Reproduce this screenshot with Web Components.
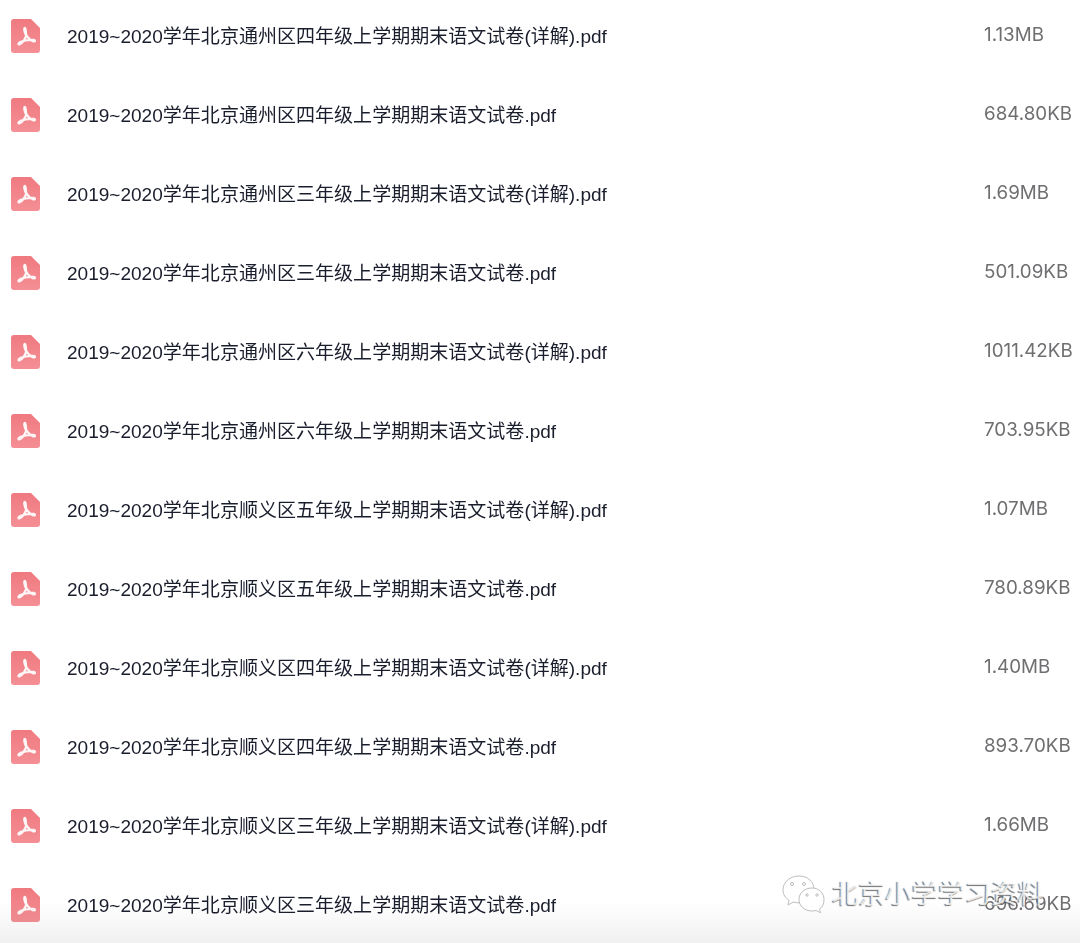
<!DOCTYPE html>
<html lang="zh">
<head>
<meta charset="utf-8">
<title>pdf list</title>
<style>
  html, body { margin: 0; padding: 0; background: #fff; }
  body { width: 1080px; height: 943px; overflow: hidden; position: relative; font-family: "Liberation Sans", "Noto Sans CJK SC", sans-serif; }
</style>
</head>
<body>
<file-list>
  <file-row size="1.13MB">2019~2020学年北京通州区四年级上学期期末语文试卷(详解).pdf</file-row>
  <file-row size="684.80KB">2019~2020学年北京通州区四年级上学期期末语文试卷.pdf</file-row>
  <file-row size="1.69MB">2019~2020学年北京通州区三年级上学期期末语文试卷(详解).pdf</file-row>
  <file-row size="501.09KB">2019~2020学年北京通州区三年级上学期期末语文试卷.pdf</file-row>
  <file-row size="1011.42KB">2019~2020学年北京通州区六年级上学期期末语文试卷(详解).pdf</file-row>
  <file-row size="703.95KB">2019~2020学年北京通州区六年级上学期期末语文试卷.pdf</file-row>
  <file-row size="1.07MB">2019~2020学年北京顺义区五年级上学期期末语文试卷(详解).pdf</file-row>
  <file-row size="780.89KB">2019~2020学年北京顺义区五年级上学期期末语文试卷.pdf</file-row>
  <file-row size="1.40MB">2019~2020学年北京顺义区四年级上学期期末语文试卷(详解).pdf</file-row>
  <file-row size="893.70KB">2019~2020学年北京顺义区四年级上学期期末语文试卷.pdf</file-row>
  <file-row size="1.66MB">2019~2020学年北京顺义区三年级上学期期末语文试卷(详解).pdf</file-row>
  <file-row size="696.69KB">2019~2020学年北京顺义区三年级上学期期末语文试卷.pdf</file-row>
</file-list>
<wechat-mark>北京小学学习资料</wechat-mark>

<script>
class FileList extends HTMLElement{
    constructor(){
        super();
        this.attachShadow({mode:'open'})
        this.shadowRoot.innerHTML = `
      <style>
        :host { display: flex; flex-direction: column; margin-top: -4px; }
      </style>
      <slot></slot>
        `
    }
}
customElements.define('file-list', FileList)

class FileRow extends HTMLElement{
    constructor(){
        super();
        this.attachShadow({mode:'open'})
        const size = this.getAttribute('size') || '';
        this.shadowRoot.innerHTML = `
      <style>
        :host {
          display: flex;
          align-items: center;
          height: 79px;
          padding-left: 11px;
          font-size: 19.05px;
        }
        svg { width: 29px; height: 34px; flex: none; margin-right: 27px; filter: blur(.4px); }
        .name { flex: 1; color: #1a1d2c; white-space: nowrap; position: relative; top: -1px; filter: blur(.3px); }
        .size { width: 96px; flex: none; color: #6f6f72; white-space: nowrap; font: 18.8px Inter, "Liberation Sans", sans-serif; position: relative; top: -1px; filter: blur(.3px); }
      </style>
      <svg viewBox="0 0 29 34">
        <defs>
          <linearGradient id="g" x1="0" y1="0" x2="0" y2="1">
            <stop offset="0" stop-color="#ef7a80"/>
            <stop offset="1" stop-color="#f48f95"/>
          </linearGradient>
        </defs>
        <path d="M3 0H20L29 9V31a3 3 0 0 1-3 3H3a3 3 0 0 1-3-3V3a3 3 0 0 1 3-3Z" fill="url(#g)"/>
        <path d="M13.800 9C12.800 9 13.200 12.500 15.200 16.800C13.800 20.500 11.200 24 8.600 25.300C7 26 6.800 24 9.800 22.800C13 21.600 18 20.400 22.600 21C24.600 21.300 24.300 23 22.200 22.300C19.800 21.500 17 19 15.200 15.800C14.600 13 15 9 13.800 9Z" fill="none" stroke="#fff" stroke-opacity=".92" stroke-width="2.300" stroke-linejoin="round"/>
      </svg>
      <span class="name"><slot></slot></span>
      <span class="size">${size}</span>
        `
    }
}
customElements.define('file-row', FileRow)

class WechatMark extends HTMLElement{
    constructor(){
        super();
        this.attachShadow({mode:'open'})
        this.shadowRoot.innerHTML = `
      <style>
        :host {
          position: absolute;
          left: 0; right: 0; bottom: 0;
          height: 83px;
          display: flex;
          align-items: flex-start;
          padding: 17px 0 0 781px;
          box-sizing: border-box;
          gap: 7px;
          background: linear-gradient(to bottom, rgba(0,0,0,0) 0 50%, rgba(0,0,0,.06) 100%);
          pointer-events: none;
        }
        svg { width: 44px; height: 38px; flex: none; margin-top: -2px; }
        span {
          font-size: 26.5px;
          line-height: 34px;
          white-space: nowrap;
          color: rgba(255,255,255,.8);
          text-shadow: -1px 1px 1px rgba(80,80,80,.8);
        }
      </style>
      <svg viewBox="0 0 44 38" fill="#fff" stroke="#bdbdbd" stroke-width="1">
        <path d="M18 1C9 1 2 7 2 15c0 4.500 2.500 8 6 10.500L7 30l5.500-3c2 .6 3.500.8 5.500.8C27 27.800 33 21 33 14.500 33 7 27 1 18 1Z"/>
        <path d="M31 13c-7.500 0-13 5-13 11.500S23.500 36 31 36c1.500 0 2.500-.2 4-.6l4.500 2.400-1-3.800c3-2 4.500-5 4.500-9.500C43 18 38 13 31 13Z"/>
        <circle cx="11" cy="9" r="1.500" fill="none"/><circle cx="23" cy="9" r="1.500" fill="none"/>
        <circle cx="26" cy="20" r="1.200" fill="none"/><circle cx="36" cy="20" r="1.200" fill="none"/>
      </svg>
      <span><slot></slot></span>
        `
    }
}
customElements.define('wechat-mark', WechatMark)
</script>
</body>
</html>
